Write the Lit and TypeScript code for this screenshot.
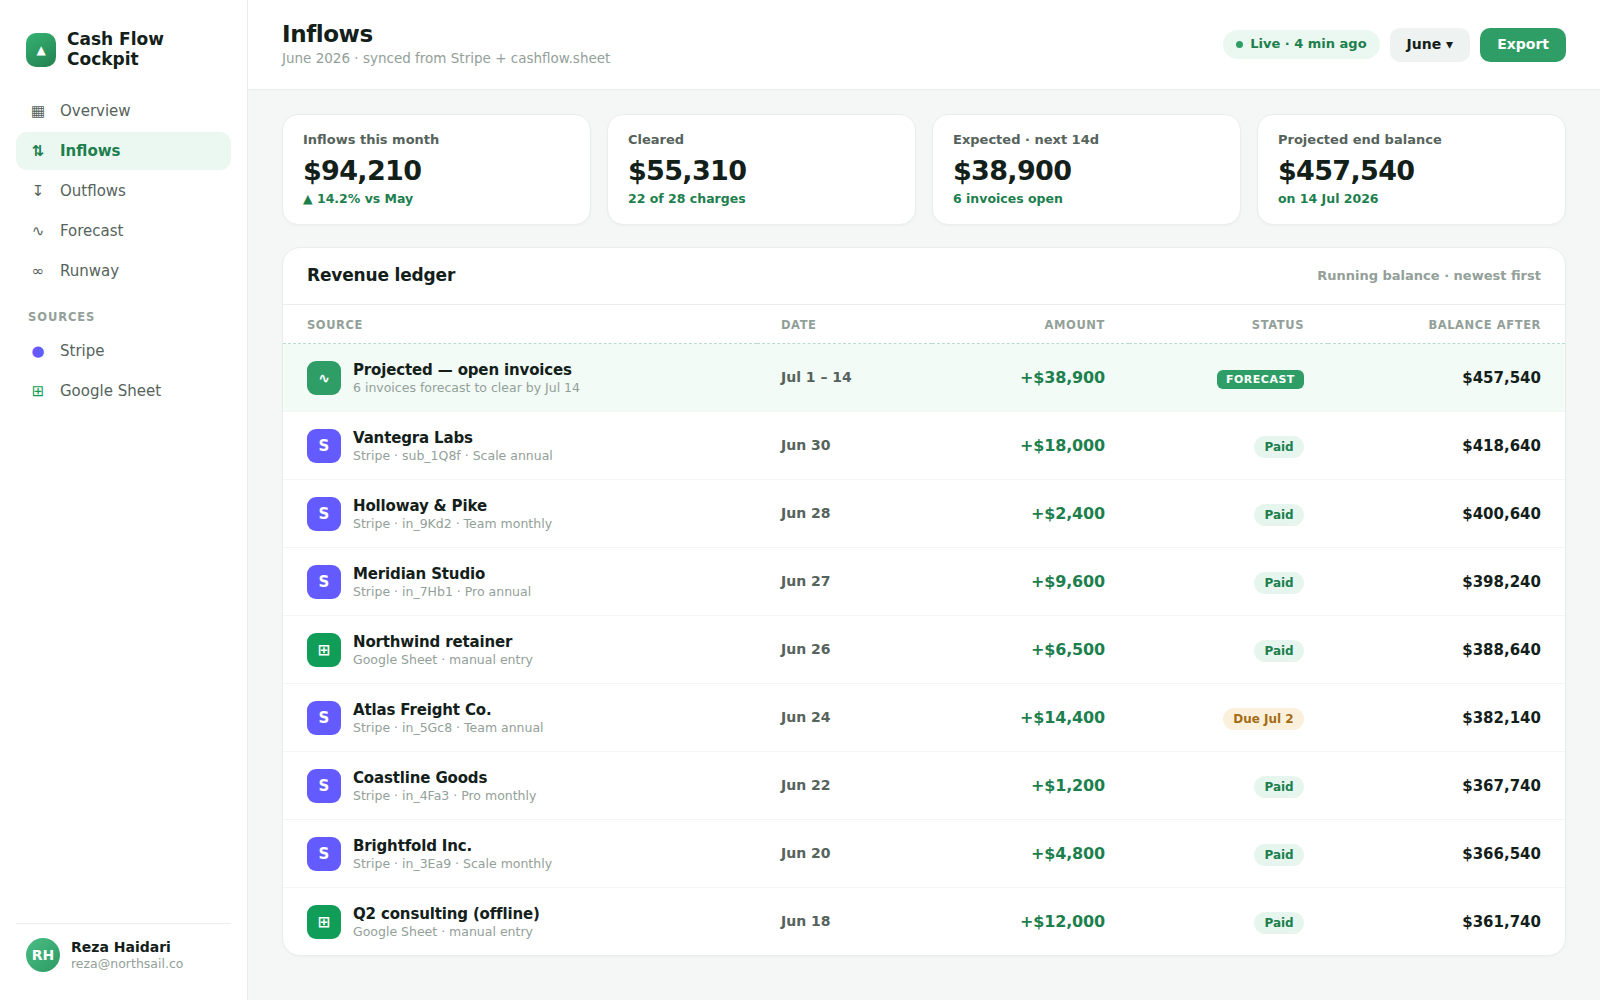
import {html, css, LitElement} from 'lit';
import {customElement, property} from 'lit/decorators.js';
import {classMap} from 'lit/directives/class-map.js';

const nav = [
  { icon: '▦', label: 'Overview' },
  { icon: '⇅', label: 'Inflows', active: true },
  { icon: '↧', label: 'Outflows' },
  { icon: '∿', label: 'Forecast' },
  { icon: '∞', label: 'Runway' },
];

const sources = [
  { icon: '●', label: 'Stripe', kind: 'stripe' },
  { icon: '⊞', label: 'Google Sheet', kind: 'sheet' },
];

const stats = [
  { label: 'Inflows this month', value: '$94,210', note: '▲ 14.2% vs May' },
  { label: 'Cleared', value: '$55,310', note: '22 of 28 charges' },
  { label: 'Expected · next 14d', value: '$38,900', note: '6 invoices open' },
  { label: 'Projected end balance', value: '$457,540', note: 'on 14 Jul 2026' },
];

const ledger = [
  { kind: 'forecast', name: 'Projected — open invoices', detail: '6 invoices forecast to clear by Jul 14', date: 'Jul 1 – 14', amount: '+$38,900', status: 'Forecast', balance: '$457,540' },
  { kind: 'stripe', name: 'Vantegra Labs', detail: 'Stripe · sub_1Q8f · Scale annual', date: 'Jun 30', amount: '+$18,000', status: 'Paid', balance: '$418,640' },
  { kind: 'stripe', name: 'Holloway & Pike', detail: 'Stripe · in_9Kd2 · Team monthly', date: 'Jun 28', amount: '+$2,400', status: 'Paid', balance: '$400,640' },
  { kind: 'stripe', name: 'Meridian Studio', detail: 'Stripe · in_7Hb1 · Pro annual', date: 'Jun 27', amount: '+$9,600', status: 'Paid', balance: '$398,240' },
  { kind: 'sheet', name: 'Northwind retainer', detail: 'Google Sheet · manual entry', date: 'Jun 26', amount: '+$6,500', status: 'Paid', balance: '$388,640' },
  { kind: 'stripe', name: 'Atlas Freight Co.', detail: 'Stripe · in_5Gc8 · Team annual', date: 'Jun 24', amount: '+$14,400', status: 'Due Jul 2', balance: '$382,140' },
  { kind: 'stripe', name: 'Coastline Goods', detail: 'Stripe · in_4Fa3 · Pro monthly', date: 'Jun 22', amount: '+$1,200', status: 'Paid', balance: '$367,740' },
  { kind: 'stripe', name: 'Brightfold Inc.', detail: 'Stripe · in_3Ea9 · Scale monthly', date: 'Jun 20', amount: '+$4,800', status: 'Paid', balance: '$366,540' },
  { kind: 'sheet', name: 'Q2 consulting (offline)', detail: 'Google Sheet · manual entry', date: 'Jun 18', amount: '+$12,000', status: 'Paid', balance: '$361,740' },
];

const glyphs = { forecast: '∿', stripe: 'S', sheet: '⊞' };

@customElement('side-bar')
class SideBar extends LitElement {
  static styles = css`
    :host {
      box-sizing: border-box;
      display: flex;
      flex-direction: column;
      width: 248px;
      flex: none;
      padding: 28px 16px 18px;
      background: #fff;
      border-right: 1px solid #e9edeb;
    }

    .brand {
      box-sizing: border-box;
      display: flex;
      align-items: center;
      gap: 11px;
      height: 64px;
      padding: 1px 10px 21px;
    }

    .logo {
      display: grid;
      place-items: center;
      width: 30px;
      height: 34px;
      flex: none;
      border-radius: 10px;
      background: linear-gradient(150deg, #36b374, #23804f);
      color: #fff;
      font-size: 12px;
      font-weight: 700;
    }

    .brand-name {
      margin-top: -2px;
      font-size: 17px;
      font-weight: 700;
      line-height: 20px;
    }

    .group {
      display: flex;
      flex-direction: column;
      gap: 2px;
    }

    .item {
      display: flex;
      align-items: center;
      gap: 12px;
      height: 38px;
      padding: 0 12px;
      border-radius: 11px;
      color: #56635c;
      font-size: 15px;
    }

    .item.active {
      background: #ebf8f1;
      color: #1d7f4e;
      font-weight: 700;
    }

    .icon {
      width: 20px;
      text-align: center;
    }

    .icon.stripe {
      color: #635bff;
    }

    .icon.sheet {
      color: #0f9d58;
    }

    .heading {
      padding: 20px 12px 8px;
      color: #93a099;
      font-size: 11.5px;
      font-weight: 700;
      line-height: 14px;
      letter-spacing: 0.08em;
    }

    .user {
      display: flex;
      align-items: center;
      gap: 11px;
      margin-top: auto;
      padding: 14px 10px 10px;
      border-top: 1px solid #e9edeb;
    }

    .avatar {
      display: grid;
      place-items: center;
      width: 34px;
      height: 34px;
      border-radius: 50%;
      background: linear-gradient(135deg, #4dbd87, #2a9a62);
      color: #fff;
      font-size: 14px;
      font-weight: 700;
    }

    .user-name {
      font-size: 14px;
      font-weight: 700;
      line-height: 17px;
    }

    .email {
      color: #93a099;
      font-size: 12.5px;
      line-height: 15px;
    }
  `;

  renderItem(item) {
    return html`
      <div class=${classMap({ item: true, active: !!item.active })}>
        <span class="icon ${item.kind ?? ''}">${item.icon}</span>
        <span>${item.label}</span>
      </div>
    `;
  }

  render() {
    return html`
      <div class="brand">
        <div class="logo">▲</div>
        <div class="brand-name">Cash Flow<br />Cockpit</div>
      </div>
      <nav class="group">${nav.map(item => this.renderItem(item))}</nav>
      <div class="heading">SOURCES</div>
      <nav class="group">${sources.map(item => this.renderItem(item))}</nav>
      <div class="user">
        <div class="avatar">RH</div>
        <div>
          <div class="user-name">Reza Haidari</div>
          <div class="email">reza@northsail.co</div>
        </div>
      </div>
    `;
  }
}

@customElement('stat-card')
class StatCard extends LitElement {
  @property() label = '';
  @property() value = '';
  @property() note = '';

  static styles = css`
    :host {
      box-sizing: border-box;
      display: block;
      height: 111px;
      padding: 17px 20px;
      background: #fff;
      border: 1px solid #e9edeb;
      border-radius: 16px;
      box-shadow: 0 1px 2px rgba(16, 32, 24, 0.03);
    }

    .label {
      color: #56635c;
      font-size: 13px;
      font-weight: 700;
      line-height: 16px;
    }

    .value {
      margin-top: 7px;
      font-size: 27px;
      font-weight: 700;
      line-height: 32px;
      letter-spacing: -0.025em;
    }

    .note {
      margin-top: 4px;
      color: #1d7f4e;
      font-size: 12.5px;
      font-weight: 700;
      line-height: 15px;
    }
  `;

  render() {
    return html`
      <div class="label">${this.label}</div>
      <div class="value">${this.value}</div>
      <div class="note">${this.note}</div>
    `;
  }
}

@customElement('revenue-ledger')
class RevenueLedger extends LitElement {
  @property({ attribute: false }) rows = [];

  static styles = css`
    :host {
      display: block;
      overflow: hidden;
      background: #fff;
      border: 1px solid #e9edeb;
      border-radius: 18px;
      box-shadow: 0 1px 2px rgba(16, 32, 24, 0.03);
    }

    .head {
      display: flex;
      align-items: center;
      justify-content: space-between;
      height: 54px;
      padding: 0 24px 2px;
    }

    .title {
      font-size: 17px;
      font-weight: 700;
      letter-spacing: -0.01em;
    }

    .hint {
      color: #93a099;
      font-size: 13px;
      font-weight: 700;
    }

    table {
      width: 100%;
      table-layout: fixed;
      border-collapse: collapse;
      border-top: 1px solid #e9edeb;
    }

    .col-source { width: 474px; }
    .col-date { width: 175px; }
    .col-amount { width: 197px; }
    .col-status { width: 199px; }
    .col-balance { width: 237px; }

    th {
      height: 36px;
      padding: 2px 24px 0;
      color: #93a099;
      font-size: 11.5px;
      font-weight: 700;
      letter-spacing: 0.05em;
      text-align: left;
    }

    td {
      height: 67px;
      padding: 0 24px;
      border-top: 1px solid #f3f6f4;
    }

    .forecast-row td {
      background: #f2fbf6;
      border-top: 1px dashed #b9dcca;
    }

    .right {
      text-align: right;
    }

    .source {
      display: flex;
      align-items: center;
      gap: 12px;
    }

    .badge {
      display: grid;
      place-items: center;
      width: 34px;
      height: 34px;
      border-radius: 9px;
      color: #fff;
      font-size: 15px;
      font-weight: 700;
    }

    .badge.forecast {
      background: #2e9e66;
      font-size: 14px;
    }

    .badge.stripe { background: #635bff; }
    .badge.sheet { background: #0f9d58; }

    .name {
      margin-top: 2px;
      font-size: 15px;
      font-weight: 700;
      line-height: 18px;
      letter-spacing: -0.01em;
    }

    .detail {
      color: #93a099;
      font-size: 12.5px;
      line-height: 17px;
    }

    .date {
      padding-bottom: 1px;
      height: 66px;
      color: #56635c;
      font-size: 14px;
      font-weight: 700;
    }

    .amount {
      color: #1d7f4e;
      font-size: 16px;
      font-weight: 700;
      letter-spacing: -0.01em;
    }

    .balance {
      font-size: 15px;
      font-weight: 700;
    }

    .status {
      padding-top: 3px;
      height: 64px;
    }

    .pill {
      display: inline-block;
      padding: 0 10.3px;
      border-radius: 11px;
      background: #e6f6ee;
      color: #1d7f4e;
      font-size: 12px;
      font-weight: 700;
      line-height: 22px;
    }

    .pill.due {
      background: #fbf0db;
      color: #a46c15;
    }

    .pill.forecast {
      margin-bottom: 2px;
      padding: 0 9.2px;
      border-radius: 6px;
      background: #2e9e66;
      color: #fff;
      font-size: 11px;
      line-height: 19px;
      letter-spacing: 0.045em;
      text-transform: uppercase;
    }
  `;

  renderRow(row) {
    const pill = {
      pill: true,
      due: row.status.startsWith('Due'),
      forecast: row.kind === 'forecast',
    };

    return html`
      <tr class=${classMap({ 'forecast-row': row.kind === 'forecast' })}>
        <td>
          <div class="source">
            <div class="badge ${row.kind}">${glyphs[row.kind]}</div>
            <div>
              <div class="name">${row.name}</div>
              <div class="detail">${row.detail}</div>
            </div>
          </div>
        </td>
        <td class="date">${row.date}</td>
        <td class="amount right">${row.amount}</td>
        <td class="status right"><span class=${classMap(pill)}>${row.status}</span></td>
        <td class="balance right">${row.balance}</td>
      </tr>
    `;
  }

  render() {
    return html`
      <div class="head">
        <div class="title">Revenue ledger</div>
        <div class="hint">Running balance · newest first</div>
      </div>
      <table>
        <colgroup>
          <col class="col-source" />
          <col class="col-date" />
          <col class="col-amount" />
          <col class="col-status" />
          <col class="col-balance" />
        </colgroup>
        <thead>
          <tr>
            <th>SOURCE</th>
            <th>DATE</th>
            <th class="right">AMOUNT</th>
            <th class="right">STATUS</th>
            <th class="right">BALANCE AFTER</th>
          </tr>
        </thead>
        <tbody>
          ${this.rows.map(row => this.renderRow(row))}
        </tbody>
      </table>
    `;
  }
}

@customElement('app-root')
class AppRoot extends LitElement {
  static styles = css`
    :host {
      display: flex;
      height: 1000px;
      overflow: hidden;
      background: #f4f7f5;
      color: #13201a;
      font-family: 'DejaVu Sans', sans-serif;
    }

    .main {
      flex: 1;
      min-width: 0;
    }

    .topbar {
      box-sizing: border-box;
      display: flex;
      align-items: center;
      justify-content: space-between;
      height: 90px;
      padding: 0 34px;
      background: #fff;
      border-bottom: 1px solid #e9edeb;
    }

    .heading {
      padding-bottom: 2px;
    }

    .title {
      font-size: 23px;
      font-weight: 700;
      line-height: 27px;
      letter-spacing: -0.02em;
      letter-spacing: -0.4px;
    }

    .subtitle {
      margin-top: 2px;
      color: #93a099;
      font-size: 13.5px;
      line-height: 16px;
    }

    .actions {
      display: flex;
      align-items: center;
      gap: 10px;
    }

    .live {
      display: flex;
      align-items: center;
      gap: 7px;
      height: 29px;
      padding: 0 13px;
      border-radius: 15px;
      background: #ebf8f1;
      color: #1d7f4e;
      font-size: 13px;
      font-weight: 700;
    }

    .live-text {
      padding-bottom: 2px;
    }

    .dot {
      width: 7px;
      height: 7px;
      border-radius: 50%;
      background: #2e9e66;
    }

    .button {
      height: 34px;
      padding: 0 17px 2px;
      border: none;
      border-radius: 10px;
      background: #eef2f0;
      color: inherit;
      font: 700 14px 'DejaVu Sans', sans-serif;
    }

    .button.primary {
      background: #2e9e66;
      color: #fff;
    }

    .content {
      display: flex;
      flex-direction: column;
      gap: 22px;
      padding: 24px 34px;
    }

    .stats {
      display: grid;
      grid-template-columns: repeat(4, 1fr);
      gap: 16px;
    }
  `;

  render() {
    return html`
      <side-bar></side-bar>
      <div class="main">
        <header class="topbar">
          <div class="heading">
            <div class="title">Inflows</div>
            <div class="subtitle">June 2026 · synced from Stripe + cashflow.sheet</div>
          </div>
          <div class="actions">
            <div class="live"><span class="dot"></span><span class="live-text">Live · 4 min ago</span></div>
            <button class="button">June ▾</button>
            <button class="button primary">Export</button>
          </div>
        </header>
        <div class="content">
          <div class="stats">
            ${stats.map(stat => html`
              <stat-card label=${stat.label} value=${stat.value} note=${stat.note}></stat-card>
            `)}
          </div>
          <revenue-ledger .rows=${ledger}></revenue-ledger>
        </div>
      </div>
    `;
  }
}
